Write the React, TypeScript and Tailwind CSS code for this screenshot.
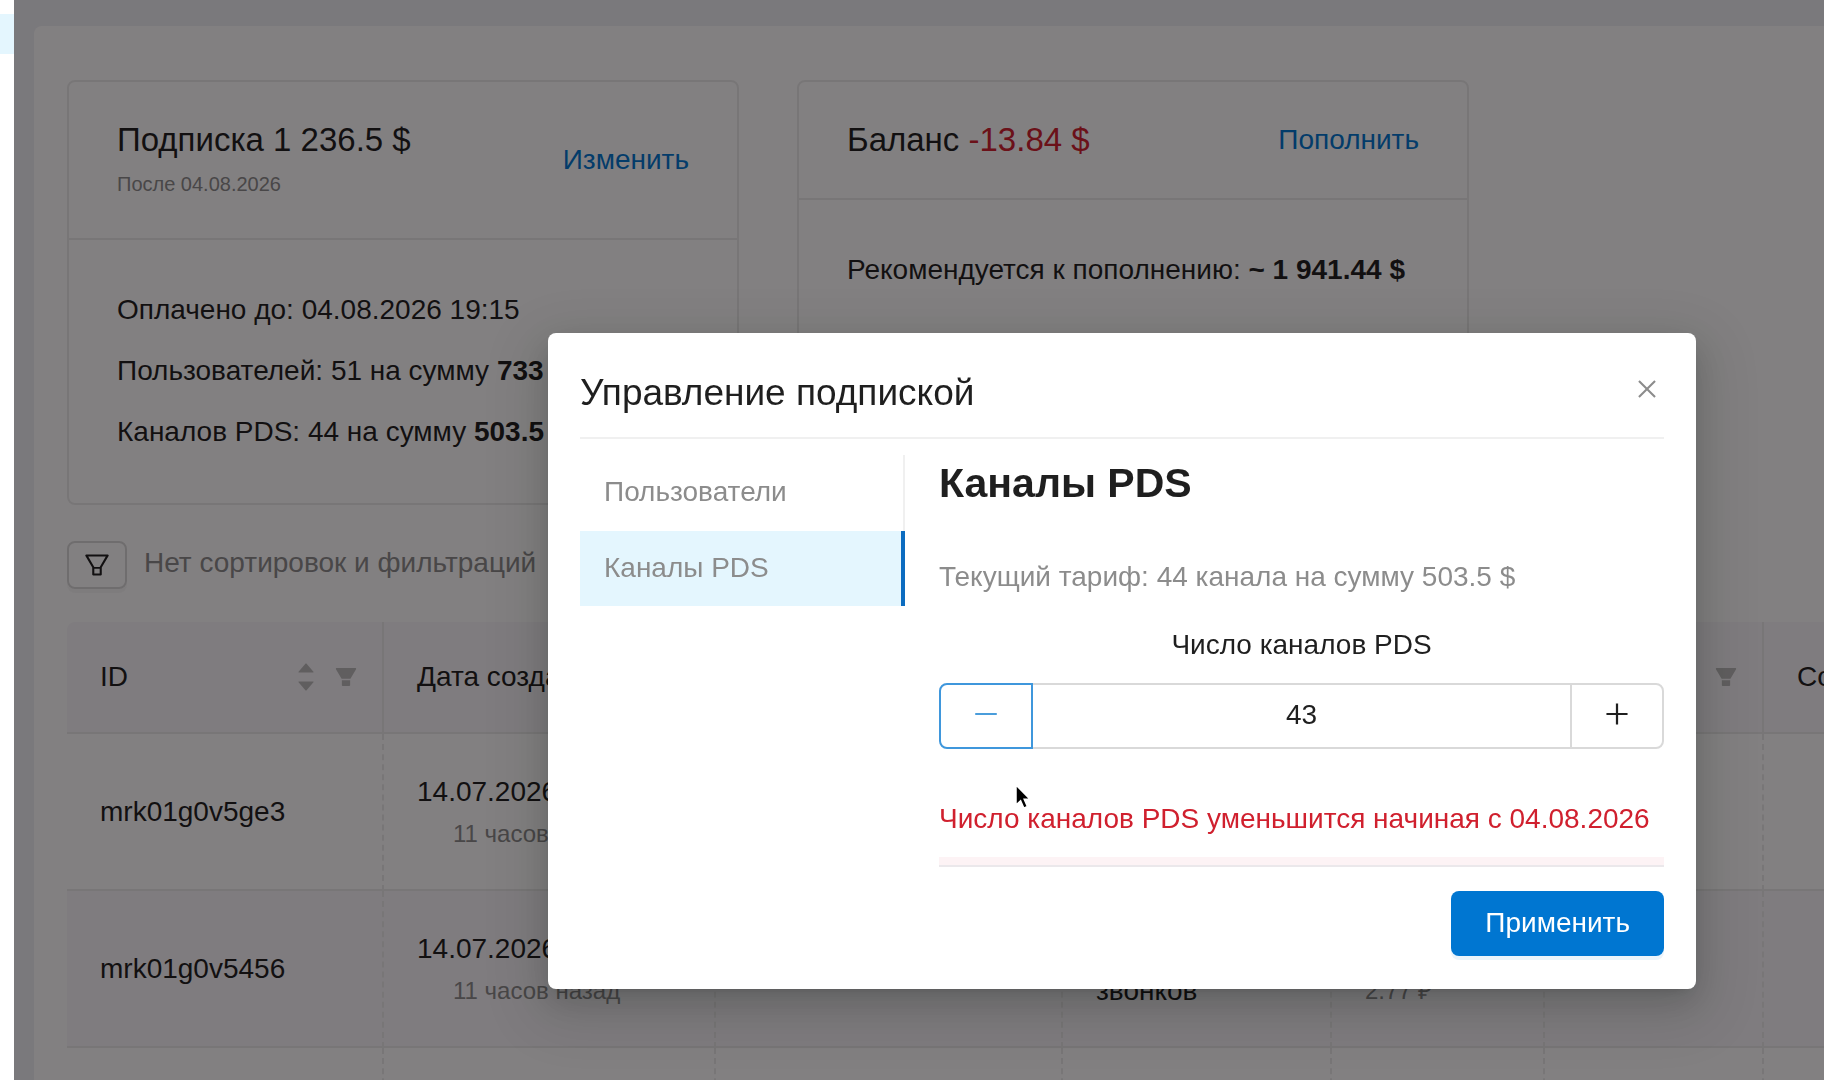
import React, { useState } from "react";
import {
  AiFillCaretDown,
  AiFillCaretUp,
  AiFillFilter,
  AiOutlineClose,
  AiOutlineFilter,
  AiOutlineMinus,
  AiOutlinePlus,
} from "react-icons/ai";

type Column = { title: string; sorter?: boolean; filter?: boolean; width: string };

const columns: Column[] = [
  { title: "ID", sorter: true, filter: true, width: "w-[317px]" },
  { title: "Дата создания", width: "w-[332px]" },
  { title: "", width: "w-[347px]" },
  { title: "", width: "w-[269px]" },
  { title: "", width: "w-[213px]" },
  { title: "", filter: true, width: "w-[219px]" },
  { title: "Сотрудник", width: "w-[320px]" },
];

const rows = [
  { id: "mrk01g0v5ge3", date: "14.07.2026", ago: "11 часов назад", kind: "", sum: "" },
  { id: "mrk01g0v5456", date: "14.07.2026", ago: "11 часов назад", kind: "звонков", sum: "2.77 ₽" },
];

const Card: React.FC<{ head: React.ReactNode; link: string; children: React.ReactNode }> = ({ head, link, children }) => (
  <section className="w-[672px] shrink-0 rounded-lg border-2 border-[#ebebeb]">
    <header className="flex items-center justify-between border-b-2 border-[#ebebeb] px-12 py-6">
      <div>{head}</div>
      <a href="#" className="text-[#0076d1]">{link}</a>
    </header>
    <div className="flex flex-col gap-[17px] px-12 py-12">{children}</div>
  </section>
);

const HistoryTable = () => (
  <table className="mt-[33px] w-[2017px] table-fixed border-separate border-spacing-0 text-left">
    <thead>
      <tr>
        {columns.map((col, i) => (
          <th
            key={i}
            className={`${col.width} h-[112px] border-r-2 border-b-2 border-[#ebebeb] bg-[#f8f7fa] px-[33px] font-normal first:rounded-tl-lg`}
          >
            <div className="flex items-center justify-between">
              <span className="whitespace-nowrap">{col.title}</span>
              <span className="flex items-center gap-4 text-[#bbbbbb]">
                {col.sorter && (
                  <span className="flex flex-col">
                    <AiFillCaretUp size={22} className="-mb-1" />
                    <AiFillCaretDown size={22} />
                  </span>
                )}
                {col.filter && <AiFillFilter size={26} className="-mr-2.5" />}
              </span>
            </div>
          </th>
        ))}
      </tr>
    </thead>
    <tbody className="[&_td]:h-[157px] [&_td]:border-r-2 [&_td]:border-b-2 [&_td]:border-[#ebebeb] [&_td]:px-[33px] [&_td]:[border-right-style:dashed]">
      {rows.map((row) => (
        <tr key={row.id} className="even:bg-[#f8f7fa]">
          <td>{row.id}</td>
          <td>
            <div>{row.date}</div>
            <div className="pl-9 text-[24px] leading-10 text-[#8c8c8c]">{row.ago}</div>
          </td>
          <td />
          <td className="pt-11">{row.kind}</td>
          <td className="pt-11 text-[24px] text-[#8c8c8c]">{row.sum}</td>
          <td />
          <td />
        </tr>
      ))}
      <tr>
        {columns.map((_, i) => (
          <td key={i} />
        ))}
      </tr>
    </tbody>
  </table>
);

const SubscriptionModal = () => {
  const [count, setCount] = useState(43);

  return (
    <div
      role="dialog"
      aria-labelledby="modal-title"
      className="relative w-[1148px] self-start rounded-lg bg-white px-8 pt-8 pb-[33px] shadow-[0_6px_12px_-8px_rgba(0,0,0,0.2),0_12px_32px_0_rgba(0,0,0,0.14),0_18px_56px_16px_rgba(0,0,0,0.09)]"
    >
      <div className="flex items-center justify-between border-b-2 border-[#f0f0f0] pb-4">
        <h2 id="modal-title" className="text-[37px] leading-[56px]">Управление подпиской</h2>
        <button aria-label="Закрыть" className="mr-1 pb-2 text-[#8c8c8c]">
          <AiOutlineClose size={26} />
        </button>
      </div>

      <div className="mt-4 flex">
        <nav className="w-[325px] shrink-0 text-[#8c8c8c]">
          <button className="block h-[76px] w-full border-r-2 border-[#f0f0f0] px-6 pb-0.5 text-left">Пользователи</button>
          <button className="block h-[75px] w-full border-r-4 border-[#0b6cc0] bg-[#e4f6fe] px-6 pb-0.5 text-left">Каналы PDS</button>
        </nav>

        <div className="min-w-0 flex-1 pl-[34px]">
          <h3 className="text-[41px] leading-[56px] font-bold">Каналы PDS</h3>
          <p className="mt-11 text-[#8c8c8c]">Текущий тариф: 44 канала на сумму 503.5 $</p>
          <label htmlFor="channels" className="mt-6 block text-center">Число каналов PDS</label>
          <div className="mt-4 flex h-[66px]">
            <button
              aria-label="Меньше"
              onClick={() => setCount(count - 1)}
              className="grid w-[94px] place-items-center rounded-l-lg border-2 border-[#3f97dc] pb-1 text-[#4a9ddb]"
            >
              <AiOutlineMinus size={30} />
            </button>
            <input
              id="channels"
              value={count}
              onChange={(e) => setCount(Number(e.target.value))}
              className="min-w-0 flex-1 border-y-2 border-[#d9d9d9] pb-0.5 text-center outline-none"
            />
            <button
              aria-label="Больше"
              onClick={() => setCount(count + 1)}
              className="grid w-[94px] place-items-center rounded-r-lg border-2 border-[#d9d9d9] pb-1"
            >
              <AiOutlinePlus size={30} />
            </button>
          </div>
          <p className="mt-12 whitespace-nowrap text-[#d0202e]">Число каналов PDS уменьшится начиная с 04.08.2026</p>
          <div className="mt-4 h-2 bg-[#fdf3f5]" />
          <div className="border-t-2 border-[#ebe8eb] pt-6 text-right">
            <button className="h-[65px] rounded-lg bg-[#0076d1] px-[34px] pb-0.5 text-white shadow-[0_4px_0_rgba(0,118,209,0.08)]">
              Применить
            </button>
          </div>
        </div>
      </div>

      <svg className="absolute top-[450px] left-[466px]" width="18" height="28" viewBox="0 0 18 28">
        <path d="M2 2v20l4.6-4.3 3.2 7.4 3.6-1.6-3.2-7.2H16z" fill="#000" stroke="#fff" strokeWidth="1.5" />
      </svg>
    </div>
  );
};

export default function App() {
  return (
    <div className="flex h-screen overflow-hidden bg-[#eff0f5] font-['Liberation_Sans',Arial,sans-serif] text-[28px] leading-11 text-[#1f1f1f]">
      <aside className="w-[14px] shrink-0 bg-white pt-[14px]">
        <div className="h-10 bg-[#e4f6fe]" />
      </aside>

      <main className="min-w-0 flex-1 pt-[26px] pl-5">
        <div className="h-full overflow-hidden rounded-tl-lg bg-white pt-[54px] pl-[33px]">
          <div className="flex h-[425px] items-stretch gap-[58px]">
            <Card
              link="Изменить"
              head={
                <>
                  <div className="pt-3 text-[33px] leading-[44px]">Подписка 1 236.5 $</div>
                  <div className="pb-2 text-[20px] text-[#8c8c8c]">После 04.08.2026</div>
                </>
              }
            >
              <p>Оплачено до: 04.08.2026 19:15</p>
              <p>Пользователей: 51 на сумму <b>733 $</b></p>
              <p>Каналов PDS: 44 на сумму <b>503.5 $</b></p>
            </Card>
            <Card
              link="Пополнить"
              head={
                <div className="py-1 text-[33px] leading-[60px]">
                  Баланс <span className="text-[#d0202e]">-13.84 $</span>
                </div>
              }
            >
              <p className="whitespace-nowrap">Рекомендуется к пополнению: <b>~ 1 941.44 $</b></p>
            </Card>
          </div>

          <div className="mt-9 flex items-center gap-[17px]">
            <button
              aria-label="Фильтры"
              className="grid h-12 w-[60px] place-items-center rounded-lg border-2 border-[#d9d9d9] shadow-[0_4px_0_rgba(0,0,0,0.03)]"
            >
              <AiOutlineFilter size={30} />
            </button>
            <span className="pb-1 text-[#8c8c8c]">Нет сортировок и фильтраций</span>
          </div>

          <HistoryTable />
        </div>
      </main>

      <div className="fixed inset-y-0 right-0 left-[14px] flex justify-end bg-[#060203]/50 pt-[333px] pr-32">
        <SubscriptionModal />
      </div>
    </div>
  );
}
